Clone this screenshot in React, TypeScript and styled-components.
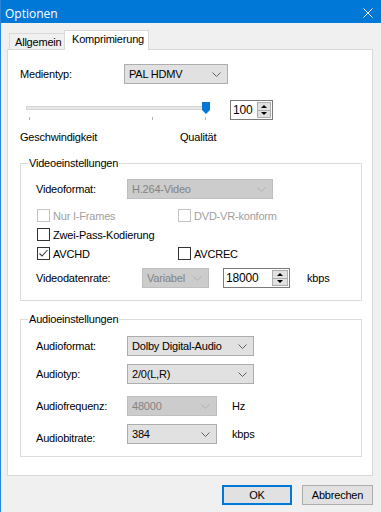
import React from "react";
import styled, { createGlobalStyle } from "styled-components";

const Global = createGlobalStyle`
  html, body { margin: 0; padding: 0; background: #f0f0f0; }
  body { font-family: "Liberation Sans", Arial, sans-serif; font-size: 11px; color: #000; letter-spacing: -0.2px; }
  * { box-sizing: border-box; }
`;

const Window = styled.div`
  width: 381px;
  height: 512px;
  display: flex;
  flex-direction: column;
  border-left: 1px solid #2a84d8;
  background: #f0f0f0;
  overflow: hidden;
`;

const TitleBar = styled.div`
  height: 23px;
  flex: none;
  background: #0078d7;
  color: #fff;
  display: flex;
  align-items: center;
  justify-content: space-between;
  padding: 3px 8px 0 4px;
  font-family: "Open Sans", "Liberation Sans", sans-serif;
  font-size: 12px;
  letter-spacing: 0;
`;

const Body = styled.div`
  flex: 1;
  display: flex;
  flex-direction: column;
  padding: 7px 8px 0 6px;
`;

const TabStrip = styled.div`
  display: flex;
  align-items: flex-end;
  height: 19px;
  padding-left: 2px;
  position: relative;
  z-index: 1;
  flex: none;
`;

const Tab = styled.div<{ $active?: boolean; $w: number }>`
  width: ${(p) => p.$w}px;
  height: ${(p) => (p.$active ? 20 : 16)}px;
  margin-bottom: ${(p) => (p.$active ? -1 : 0)}px;
  background: ${(p) => (p.$active ? "#fff" : "#f0f0f0")};
  border: 1px solid #d9d9d9;
  border-bottom: none;
  border-right: ${(p) => (p.$active ? "1px solid #d9d9d9" : "none")};
  padding-left: ${(p) => (p.$active ? 7 : 5)}px;
  line-height: ${(p) => (p.$active ? 17 : 16)}px;
`;

const Panel = styled.div`
  height: 427px;
  flex: none;
  background: #fff;
  border: 1px solid #d9d9d9;
  display: flex;
  flex-direction: column;
  padding: 14px 10px 0 12px;
`;

const Row = styled.div<{ $mt: number }>`
  display: flex;
  align-items: center;
  height: 20px;
  flex: none;
  margin-top: ${(p) => p.$mt}px;
`;

const Label = styled.span<{ $w: number; $drop?: number }>`
  width: ${(p) => p.$w}px;
  flex: none;
  padding-top: ${(p) => (p.$drop ?? 0) * 2}px;
`;

const Unit = styled.span<{ $ml: number }>`
  margin-left: ${(p) => p.$ml}px;
`;

const ComboBox = styled.div<{ $w: number; $disabled?: boolean }>`
  width: ${(p) => p.$w}px;
  height: 20px;
  flex: none;
  display: flex;
  align-items: center;
  justify-content: space-between;
  padding: 0 6px 0 4px;
  border: 1px solid ${(p) => (p.$disabled ? "#bfbfbf" : "#adadad")};
  background: ${(p) => (p.$disabled ? "#cccccc" : "#e1e1e1")};
  color: ${(p) => (p.$disabled ? "#838383" : "#000")};
`;

const Combo = ({ w, value, disabled }: { w: number; value: string; disabled?: boolean }) => (
  <ComboBox $w={w} $disabled={disabled}>
    <span>{value}</span>
    <svg width="9" height="5" viewBox="0 0 9 5">
      <polyline
        points="0.5,0.5 4.5,4.5 8.5,0.5"
        fill="none"
        stroke={disabled ? "#b0b0b0" : "#606060"}
        strokeWidth="1"
      />
    </svg>
  </ComboBox>
);

const SpinBox = styled.div<{ $w: number; $mt?: number; $ml?: number }>`
  width: ${(p) => p.$w}px;
  height: 20px;
  flex: none;
  display: flex;
  border: 1px solid #7a7a7a;
  background: #fff;
  margin-top: ${(p) => p.$mt ?? 0}px;
  margin-left: ${(p) => p.$ml ?? 0}px;
`;

const SpinValue = styled.span`
  flex: 1;
  padding-left: 2px;
  line-height: 18px;
  font-size: 12px;
`;

const SpinButtons = styled.div<{ $bw: number }>`
  width: ${(p) => p.$bw}px;
  display: flex;
  flex-direction: column;
  padding: 1px 1px 1px 0;
`;

const SpinBtn = styled.div<{ $up?: boolean }>`
  flex: 1;
  background: #e1e1e1;
  border: 1px solid #adadad;
  border-top: ${(p) => (p.$up ? "1px solid #adadad" : "none")};
  display: flex;
  align-items: center;
  justify-content: center;
  &::after {
    content: "";
    width: 0;
    height: 0;
    border-left: 3px solid transparent;
    border-right: 3px solid transparent;
    ${(p) => (p.$up ? "border-bottom: 3px solid #000;" : "border-top: 3px solid #000;")}
  }
`;

const Spinner = ({ w, bw, value, mt, ml }: { w: number; bw: number; value: string; mt?: number; ml?: number }) => (
  <SpinBox $w={w} $mt={mt} $ml={ml}>
    <SpinValue>{value}</SpinValue>
    <SpinButtons $bw={bw}>
      <SpinBtn $up />
      <SpinBtn />
    </SpinButtons>
  </SpinBox>
);

const SliderRow = styled.div`
  display: flex;
  align-items: flex-start;
  height: 26px;
  flex: none;
  margin-top: 14px;
`;

const ScaleRow = styled.div`
  display: flex;
  height: 13px;
  line-height: 13px;
  flex: none;
  margin-top: 7px;
`;

const Group = styled.fieldset<{ $mt: number }>`
  margin: ${(p) => p.$mt}px 0 0 0;
  padding: 0;
  border: 1px solid #dcdcdc;
  min-width: 0;
  flex: none;
`;

const Legend = styled.legend`
  margin-left: 7px;
  padding: 0 1px;
  line-height: 14px;
  font-size: 11px;
`;

const GroupBody = styled.div`
  display: flex;
  flex-direction: column;
  padding: 0 0 12px 15px;
`;

const CheckRow = styled.div<{ $mt?: number }>`
  display: flex;
  align-items: center;
  height: 19px;
  padding-left: 1px;
  margin-top: ${(p) => p.$mt ?? 0}px;
`;

const CheckItem = styled.label<{ $w?: number; $disabled?: boolean }>`
  display: flex;
  align-items: center;
  gap: 3px;
  width: ${(p) => (p.$w ? `${p.$w}px` : "auto")};
  flex: none;
  color: ${(p) => (p.$disabled ? "#a0a0a0" : "#000")};
`;

const Box = styled.span<{ $disabled?: boolean }>`
  width: 13px;
  height: 13px;
  flex: none;
  border: 1px solid ${(p) => (p.$disabled ? "#c4c4c4" : "#333")};
  background: #fff;
  display: inline-flex;
`;

const Check = ({ label, w, disabled, checked }: { label: string; w?: number; disabled?: boolean; checked?: boolean }) => (
  <CheckItem $w={w} $disabled={disabled}>
    <Box $disabled={disabled}>
      {checked && (
        <svg width="11" height="11" viewBox="0 0 11 11">
          <polyline points="1.5,5.5 4,8 9.5,2" fill="none" stroke="#3c3c3c" strokeWidth="1.1" />
        </svg>
      )}
    </Box>
    <span>{label}</span>
  </CheckItem>
);

const Footer = styled.div`
  display: flex;
  justify-content: flex-end;
  gap: 10px;
  margin-top: 9px;
  flex: none;
`;

const Button = styled.div<{ $w: number; $default?: boolean }>`
  width: ${(p) => p.$w}px;
  height: 20px;
  background: #e1e1e1;
  border: 1px solid ${(p) => (p.$default ? "#0078d7" : "#adadad")};
  box-shadow: ${(p) => (p.$default ? "inset 0 0 0 1px #0078d7" : "none")};
  display: flex;
  align-items: center;
  justify-content: center;
`;

const Trackbar = () => (
  <svg width="200" height="26" viewBox="0 0 200 26">
    <rect x="6.5" y="8.5" width="181" height="3" fill="#e7e7e7" stroke="#d6d6d6" />
    <path d="M182 4 H190 V12 L186 16 L182 12 Z" fill="#0078d7" />
    <rect x="9" y="19" width="1" height="3" fill="#b4b4b4" />
    <rect x="132" y="19" width="1" height="3" fill="#b4b4b4" />
    <rect x="185" y="19" width="1" height="3" fill="#b4b4b4" />
  </svg>
);

export default function App() {
  return (
    <>
      <Global />
      <Window>
        <TitleBar>
          <span>Optionen</span>
          <svg width="10" height="10" viewBox="0 0 10 10">
            <path d="M0.5 0.5 L9.5 9.5 M9.5 0.5 L0.5 9.5" stroke="#fff" strokeWidth="1" />
          </svg>
        </TitleBar>
        <Body>
          <TabStrip>
            <Tab $w={55}>Allgemein</Tab>
            <Tab $w={85} $active>
              Komprimierung
            </Tab>
          </TabStrip>
          <Panel>
            <Row $mt={0}>
              <Label $w={104}>Medientyp:</Label>
              <Combo w={104} value="PAL HDMV" />
            </Row>
            <SliderRow>
              <Trackbar />
              <Spinner w={43} bw={15} value="100" mt={2} ml={10} />
            </SliderRow>
            <ScaleRow>
              <Label $w={160}>Geschwindigkeit</Label>
              <span>Qualität</span>
            </ScaleRow>

            <Group $mt={12}>
              <Legend>Videoeinstellungen</Legend>
              <GroupBody>
                <Row $mt={9}>
                  <Label $w={91}>Videoformat:</Label>
                  <Combo w={146} value="H.264-Video" disabled />
                </Row>
                <CheckRow $mt={7}>
                  <Check w={141} label="Nur I-Frames" disabled />
                  <Check label="DVD-VR-konform" disabled />
                </CheckRow>
                <CheckRow>
                  <Check label="Zwei-Pass-Kodierung" />
                </CheckRow>
                <CheckRow>
                  <Check w={141} label="AVCHD" checked />
                  <Check label="AVCREC" />
                </CheckRow>
                <Row $mt={5}>
                  <Label $w={106}>Videodatenrate:</Label>
                  <Combo w={67} value="Variabel" disabled />
                  <Spinner w={67} bw={17} value="18000" ml={14} />
                  <Unit $ml={17}>kbps</Unit>
                </Row>
              </GroupBody>
            </Group>

            <Group $mt={11}>
              <Legend>Audioeinstellungen</Legend>
              <GroupBody>
                <Row $mt={10}>
                  <Label $w={91}>Audioformat:</Label>
                  <Combo w={127} value="Dolby Digital-Audio" />
                </Row>
                <Row $mt={8}>
                  <Label $w={91}>Audiotyp:</Label>
                  <Combo w={127} value="2/0(L,R)" />
                </Row>
                <Row $mt={12}>
                  <Label $w={91}>Audiofrequenz:</Label>
                  <Combo w={90} value="48000" disabled />
                  <Unit $ml={15}>Hz</Unit>
                </Row>
                <Row $mt={8}>
                  <Label $w={91} $drop={4}>
                    Audiobitrate:
                  </Label>
                  <Combo w={90} value="384" />
                  <Unit $ml={15}>kbps</Unit>
                </Row>
              </GroupBody>
            </Group>
          </Panel>
          <Footer>
            <Button $w={70} $default>
              OK
            </Button>
            <Button $w={71}>Abbrechen</Button>
          </Footer>
        </Body>
      </Window>
    </>
  );
}
